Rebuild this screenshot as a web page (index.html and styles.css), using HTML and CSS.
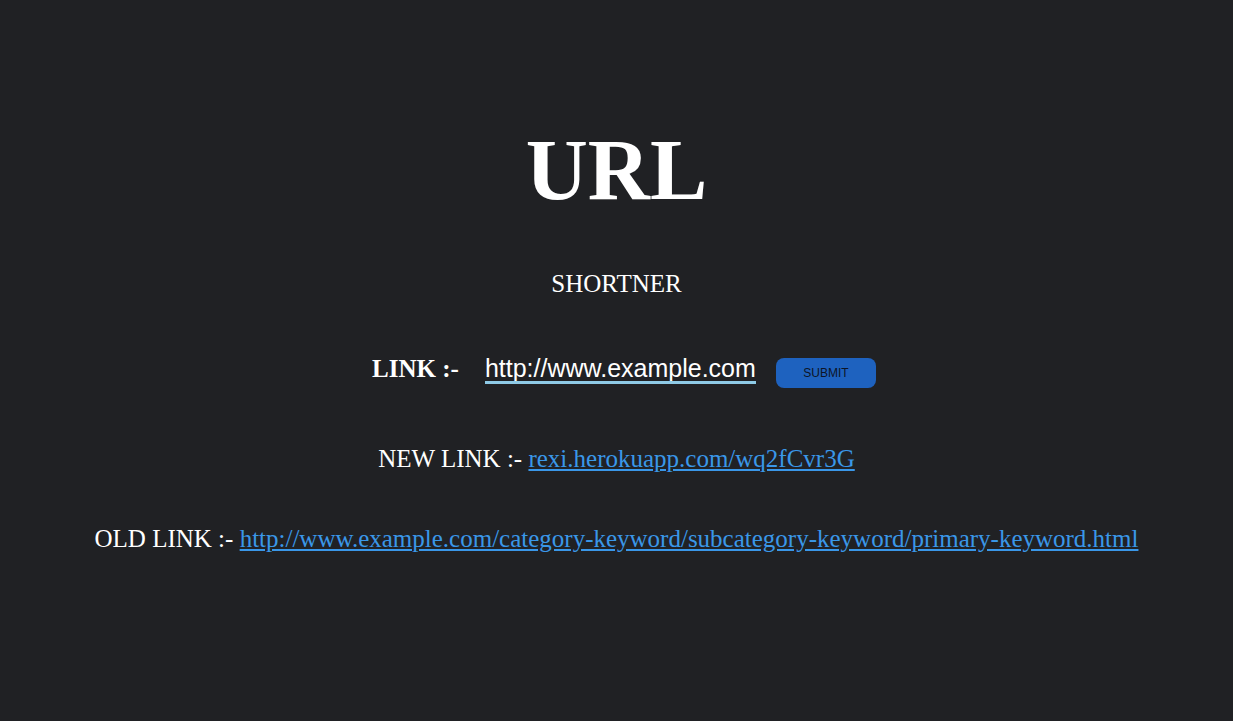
FILE: index.html
```html
<!DOCTYPE html>
<html>
<head>
<meta charset="utf-8">
<title>URL Shortner</title>
<link rel="stylesheet" href="styles.css">
</head>
<body>
<main class="page">
  <h1 class="title">URL</h1>
  <p class="subtitle">SHORTNER</p>
  <form class="link-form">
    <label class="link-label" for="url">LINK :-</label>
    <input class="link-input" id="url" type="text" value="http://www.example.com">
    <button class="submit-btn" type="button">SUBMIT</button>
  </form>
  <p class="result">NEW LINK :- <a href="#">rexi.herokuapp.com/wq2fCvr3G</a></p>
  <p class="result old">OLD LINK :- <a href="#">http://www.example.com/category-keyword/subcategory-keyword/primary-keyword.html</a></p>
</main>
</body>
</html>
```

FILE: styles.css
```css
html, body {
  margin: 0;
  padding: 0;
  background: #202124;
  height: 100%;
}
body {
  font-family: "Liberation Serif", "Times New Roman", serif;
  color: #ffffff;
}
.page {
  padding-top: 124px;
  text-align: center;
}
.title {
  margin: 0;
  font-size: 86px;
  font-weight: bold;
  line-height: 93px;
}
.subtitle {
  margin: 52px 0 0;
  font-size: 25px;
  line-height: 29px;
}
.link-form {
  margin: 56px 0 0;
  display: flex;
  justify-content: center;
  align-items: baseline;
  padding-left: 15px;
}
.link-label {
  font-size: 25px;
  line-height: 29px;
  font-weight: bold;
  margin-right: 26px;
}
.link-input {
  font-family: "Liberation Sans", Arial, sans-serif;
  font-size: 25px;
  color: #ffffff;
  background: transparent;
  border: none;
  border-bottom: 3px solid #8ecae6;
  outline: none;
  padding: 0;
  width: 271px;
  height: 24px;
}
.submit-btn {
  margin-left: 20px;
  width: 100px;
  height: 30px;
  border: none;
  border-radius: 8px;
  background: #1e62bf;
  color: #0d1526;
  font-family: "Liberation Sans", Arial, sans-serif;
  font-size: 12px;
  padding: 0;
}
.result {
  margin: 56px 0 0;
  font-size: 25px;
  line-height: 29px;
}
.result.old {
  margin-top: 51px;
}
.result a {
  color: #3a97e8;
  text-decoration: underline;
}
```
